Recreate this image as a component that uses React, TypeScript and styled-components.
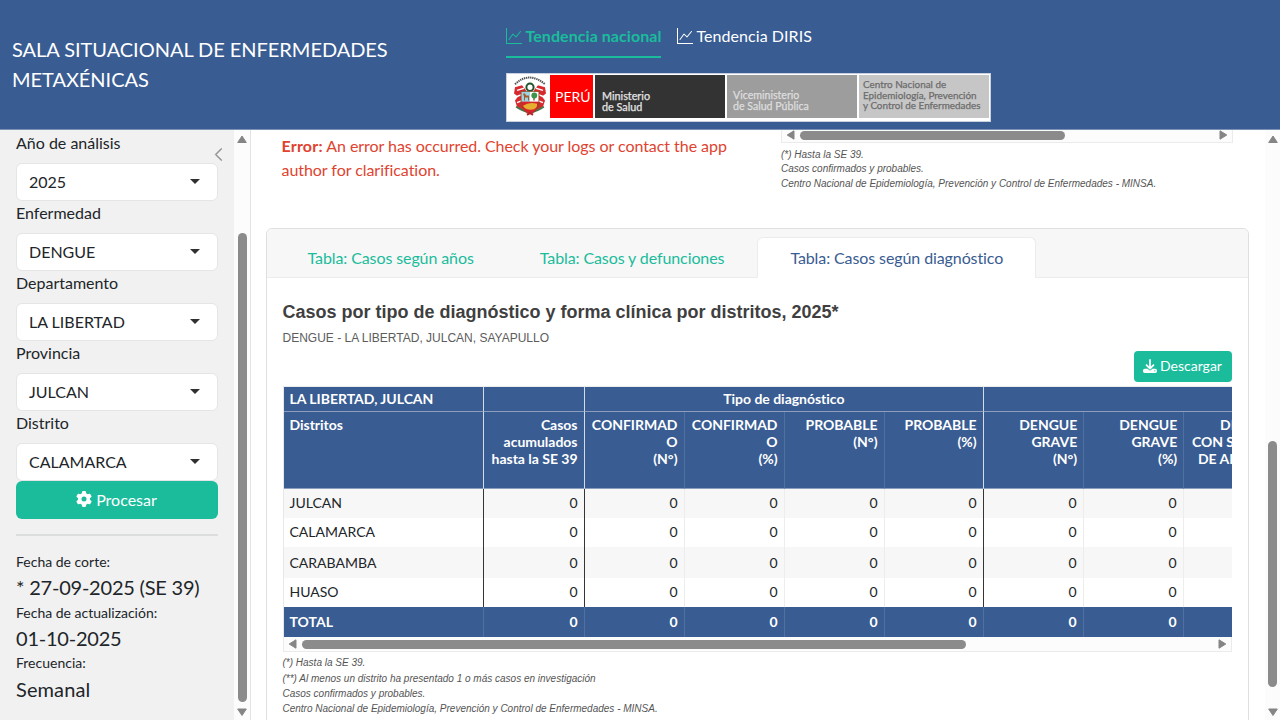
import React from "react";
import styled, { createGlobalStyle, css } from "styled-components";
import { BsGraphUp, BsChevronLeft } from "react-icons/bs";
import { FaGear, FaDownload } from "react-icons/fa6";

const BLUE = "#395c92";
const GREEN = "#1abc9c";

const GlobalStyle = createGlobalStyle`
  * { box-sizing: border-box; }
  body { margin: 0; overflow: hidden; background: #fff; color: #212529; font: 16px/24px Lato, sans-serif; }
`;

const Page = styled.div`
  width: 1280px;
  height: 720px;
  display: flex;
  flex-direction: column;
  overflow: hidden;
`;

const Header = styled.header`
  flex: none;
  height: 130px;
  display: flex;
  background: ${BLUE};
  border-bottom: 1px solid #7b91b5;
`;

const Brand = styled.h1`
  width: 506px;
  margin: 0;
  padding: 34px 90px 0 12px;
  font-size: 20px;
  line-height: 30px;
  font-weight: 400;
  letter-spacing: -0.04px;
  color: #fff;
`;

const HeaderMain = styled.div`
  display: flex;
  flex-direction: column;
  padding-top: 16px;
`;

const Nav = styled.nav`
  display: flex;
  gap: 15.5px;
  height: 57px;
`;

const NavLink = styled.a<{ $active?: boolean }>`
  display: flex;
  align-items: center;
  gap: 3.5px;
  height: 42px;
  white-space: nowrap;
  letter-spacing: 0.06px;
  color: ${(p) => (p.$active ? GREEN : "#fff")};
  font-weight: ${(p) => (p.$active ? 700 : 400)};
  border-bottom: 2px solid ${(p) => (p.$active ? GREEN : "transparent")};
  svg { flex: none; }
`;

const Banner = styled.div`
  display: flex;
  gap: 2px;
  width: 485px;
  height: 49px;
  padding: 1px 1px 3px 1px;
  background: #fff;
  border: 1px solid #c8d0de;
`;

const Emblem = styled.div`
  width: 41px;
  padding: 1px 0 0 5px;
  svg { display: block; }
`;

const Plate = styled.div<{ $w: number; $bg: string; $fg: string; $top: number; $size: number; $line: number; $pad?: number; $stroke?: number }>`
  width: ${(p) => p.$w}px;
  flex: none;
  background: ${(p) => p.$bg};
  color: ${(p) => p.$fg};
  padding: ${(p) => p.$top}px 0 0 ${(p) => p.$pad ?? 6}px;
  font-size: ${(p) => p.$size}px;
  line-height: ${(p) => p.$line}px;
  -webkit-text-stroke: ${(p) => p.$stroke ?? 0.25}px ${(p) => p.$fg};
  white-space: nowrap;
`;

const Body = styled.div`
  flex: 1;
  min-height: 0;
  display: flex;
`;

const Sidebar = styled.aside`
  width: 251px;
  flex: none;
  display: flex;
  background: #f1f1f1;
  border-right: 1px solid #e2e3e4;
  position: relative;
`;

const Collapse = styled.button`
  position: absolute;
  left: 211px;
  top: 17px;
  padding: 0;
  border: 0;
  background: none;
  color: #8b8d8f;
  line-height: 0;
  svg { stroke-width: 0.6; }
`;

const SidebarContent = styled.div`
  width: 234px;
  padding: 1px 16px 0 16px;
`;

const Field = styled.label`
  display: flex;
  flex-direction: column;
  gap: 8px;
`;

const Select = styled.span`
  display: flex;
  align-items: center;
  justify-content: space-between;
  height: 38px;
  padding: 0 17px 1px 12px;
  background: #fff;
  border: 1px solid #e3e5e7;
  border-radius: 6px;
  &::after {
    content: "";
    margin-top: -1px;
    border: 5px solid transparent;
    border-top-color: #303030;
    border-bottom: 0;
  }
`;

const Button = styled.button<{ $small?: boolean }>`
  display: flex;
  align-items: center;
  justify-content: center;
  gap: ${(p) => (p.$small ? 3 : 4)}px;
  border: 0;
  color: #fff;
  background: ${GREEN};
  font-family: Lato, sans-serif;
  ${(p) =>
    p.$small
      ? css`width: 98px; height: 31px; padding: 0 1px 2px 0; font-size: 14px; border-radius: 4px;`
      : css`width: 100%; height: 38px; padding: 0 1px 2px 0; font-size: 16px; border-radius: 6px;`}
`;

const Rule = styled.hr`
  height: 2px;
  margin: 15px 0 15px;
  border: 0;
  background: #dcdddd;
`;

const Caption = styled.div`
  font-size: 14px;
  line-height: 21px;
`;

const Value = styled.div<{ $tight?: boolean }>`
  height: ${(p) => (p.$tight ? 29.7 : 32)}px;
  font-size: 20px;
  line-height: ${(p) => (p.$tight ? 30 : 32)}px;
  white-space: nowrap;
  letter-spacing: ${(p) => (p.$tight ? "-0.22px" : "0.1px")};
`;

const VBar = styled.div<{ $w: number }>`
  width: ${(p) => p.$w}px;
  flex: none;
  display: flex;
  flex-direction: column;
  align-items: center;
  background: #fcfcfc;
  padding: 4px 0 3px;
`;

const VThumb = styled.div<{ $before: number; $len: number }>`
  width: 9px;
  height: ${(p) => p.$len}px;
  margin-top: ${(p) => p.$before}px;
  margin-bottom: auto;
  border-radius: 5px;
  background: #8b8b8b;
`;

const HBar = styled.div<{ $h: number; $lift?: number }>`
  display: flex;
  align-items: center;
  height: ${(p) => p.$h}px;
  padding: 0 4px ${(p) => p.$lift ?? 0}px;
  background: #fcfcfc;
  border: 1px solid #ebebeb;
  border-top: 0;
`;

const HThumb = styled.div<{ $len: number }>`
  width: ${(p) => p.$len}px;
  height: 9px;
  margin: 0 auto 0 4px;
  border-radius: 5px;
  background: #8b8b8b;
`;

const Main = styled.main`
  width: 1014px;
  flex: none;
  padding: 0 16px 0 15px;
  overflow: hidden;
`;

const Upper = styled.div`
  display: flex;
  height: 98px;
  padding-left: 15.5px;
`;

const ErrorText = styled.p`
  width: 499.5px;
  margin: 0;
  padding: 4px 40px 0 0;
  letter-spacing: -0.05px;
  color: #e0432f;
  b { font-weight: 700; letter-spacing: 0.2px; }
`;

const SideTable = styled.div`
  width: 452px;
`;

const Notes = styled.div<{ $top: number }>`
  padding-top: ${(p) => p.$top}px;
  font: italic 10px/15px "Liberation Sans", sans-serif;
  color: #555;
  white-space: nowrap;
`;

const Note = styled.div<{ $h?: number }>`
  height: ${(p) => p.$h ?? 15}px;
`;

const Card = styled.section`
  width: 983px;
  height: 520px;
  border: 1px solid #dfdfdf;
  border-radius: 6px;
  background: #fff;
`;

const Tabs = styled.div`
  display: flex;
  height: 49px;
  padding: 8px 8px 0 7.5px;
  background: #f7f7f7;
  border-bottom: 1px solid #ececec;
  border-radius: 6px 6px 0 0;
`;

const Tab = styled.a<{ $active?: boolean }>`
  height: 41px;
  padding: 8px 32px 0;
  white-space: nowrap;
  letter-spacing: -0.1px;
  color: ${(p) => (p.$active ? BLUE : GREEN)};
  background: ${(p) => (p.$active ? "#fff" : "transparent")};
  border: 1px solid ${(p) => (p.$active ? "#ececec" : "transparent")};
  border-bottom: 0;
  border-radius: 6px 6px 0 0;
`;

const CardBody = styled.div`
  padding: 21px 16px 0 15.5px;
`;

const Title = styled.h2`
  margin: 0;
  font: bold 18px/26px "Liberation Sans", sans-serif;
  color: #3f3f3f;
`;

const Subtitle = styled.div`
  font: 12px/26px "Liberation Sans", sans-serif;
  color: #5c5c5c;
`;

const Actions = styled.div`
  display: flex;
  justify-content: flex-end;
  height: 35px;
`;

const TableClip = styled.div`
  overflow: hidden;
  border-left: 1px solid #e8e8e8;
  border-top: 1px solid #ececec;
`;

const Table = styled.table`
  width: 1000px;
  table-layout: fixed;
  border-collapse: separate;
  border-spacing: 0;
  font-size: 14px;
  line-height: 17px;
`;

const Cell = styled.td<{ $dark?: boolean; $left?: boolean }>`
  padding: 0 6px 2px;
  text-align: ${(p) => (p.$left ? "left" : "right")};
  border-right: 1px solid ${(p) => (p.$dark ? "#353535" : "#ededed")};
`;

const HeadCell = styled.th<{ $strong?: boolean; $align: string; $top?: boolean }>`
  padding: ${(p) => (p.$top ? "0 6px 2px" : "4px 6px 0")};
  text-align: ${(p) => p.$align};
  vertical-align: ${(p) => (p.$top ? "middle" : "top")};
  font-weight: 700;
  letter-spacing: -0.02px;
  color: #fff;
  background: ${BLUE};
  white-space: pre;
  border-right: 1px solid ${(p) => (p.$strong ? "#d4dbe7" : "#50709f")};
  border-bottom: 1px solid #8b9ebe;
  &:nth-last-child(-n + 3) { padding-right: 5.3px; }
  &:last-child { padding-right: 4.5px; }
`;

const Row = styled.tr<{ $h: number; $shade?: boolean; $total?: boolean }>`
  height: ${(p) => p.$h}px;
  background: ${(p) => (p.$total ? BLUE : p.$shade ? "#f7f7f7" : "#fff")};
  ${(p) =>
    p.$h === 31 &&
    css`
      ${Cell} { padding-bottom: 0; }
    `}
  ${(p) =>
    p.$total &&
    css`
      color: #fff;
      font-weight: 700;
      ${Cell} { border-right-color: #50709f; }
    `}
`;

function Arrow({ dir }: { dir: "up" | "down" | "left" | "right" }) {
  const shapes = {
    up: "M5 2L9.3 8.5H.7z",
    down: "M5 8.5L.7 2h8.6z",
    left: "M1.2 5L8 .8v8.4z",
    right: "M8.8 5L2 .8v8.4z",
  };
  return (
    <svg width="10" height="10" viewBox="0 0 10 10" style={{ flex: "none" }}>
      <path d={shapes[dir]} fill="#858585" stroke="#858585" strokeLinejoin="round" />
    </svg>
  );
}

function CoatOfArms() {
  return (
    <svg width="34" height="41" viewBox="0 0 34 40" preserveAspectRatio="none">
      <path d="M2 8Q16 -5 32 8" fill="none" stroke="#555" strokeWidth="2" strokeDasharray="1.4 .7" />
      <path d="M2 11L9 9L13 14L10 34L4 30L2 24L5 20L1 17ZM32 11L25 9L21 14L24 34L30 30L32 24L29 20L33 17Z" fill="#d8292f" />
      <path d="M4 14L11 12M30 14L23 12M4 20L9 18M30 20L25 18M4 26L9 24M30 26L25 24" stroke="#fff" strokeWidth="1.4" />
      <path d="M3 30Q10 34 14 35M31 30Q24 34 20 35" fill="none" stroke="#47784b" strokeWidth="1.5" />
      <circle cx="17" cy="11" r="3.6" fill="#fff" stroke="#23532b" strokeWidth="2" />
      <path d="M8 15H26V27Q25 35 17 37Q9 35 8 27Z" fill="#d6242c" stroke="#7a5726" strokeWidth=".8" />
      <path d="M8.5 15.5H17V25H8.5Z" fill="#9ed5e4" />
      <path d="M17 15.5H25.5V25H17Z" fill="#fff" />
      <path d="M11 24V20L10 17H12L13 19H16V24H15V21H12V24Z" fill="#a65a2a" />
      <path d="M21 24V20" stroke="#6b4a26" strokeWidth="1.3" />
      <circle cx="21.3" cy="19" r="2.9" fill="#3f944b" />
      <path d="M10 29Q16 25 24 27Q25 32 18 33Q12 33 10 29Z" fill="#e5b02f" />
      <path d="M14 38L17 36L20 38" fill="none" stroke="#b5242a" strokeWidth="2" />
    </svg>
  );
}

const fields = [
  ["Año de análisis", "2025"],
  ["Enfermedad", "DENGUE"],
  ["Departamento", "LA LIBERTAD"],
  ["Provincia", "JULCAN"],
  ["Distrito", "CALAMARCA"],
];

const columns = [
  "Casos\nacumulados\nhasta la SE 39",
  "CONFIRMAD\nO\n(N°)",
  "CONFIRMAD\nO\n(%)",
  "PROBABLE\n(N°)",
  "PROBABLE\n(%)",
  "DENGUE\nGRAVE\n(N°)",
  "DENGUE\nGRAVE\n(%)",
  "DENGUE\nCON SIGNOS\nDE ALARMA",
];

const widths = [101, 100, 100, 100, 99, 100, 100, 100];

const rows: { name: string; h: number; shade?: boolean; total?: boolean }[] = [
  { name: "JULCAN", h: 29, shade: true },
  { name: "CALAMARCA", h: 29 },
  { name: "CARABAMBA", h: 31, shade: true },
  { name: "HUASO", h: 29 },
  { name: "TOTAL", h: 30, total: true },
];

const groupEnd = (i: number) => i === 0 || i === 4;

export default function App() {
  return (
    <Page>
      <GlobalStyle />
      <Header>
        <Brand>SALA SITUACIONAL DE ENFERMEDADES METAXÉNICAS</Brand>
        <HeaderMain>
          <Nav>
            <NavLink $active><BsGraphUp size={16} />Tendencia nacional</NavLink>
            <NavLink><BsGraphUp size={16} />Tendencia DIRIS</NavLink>
          </Nav>
          <Banner>
            <Emblem><CoatOfArms /></Emblem>
            <Plate $w={43} $bg="#fe0000" $fg="#fff" $top={13} $size={14} $line={18} $pad={5} $stroke={0}>PERÚ</Plate>
            <Plate $w={130} $bg="#333" $fg="#e4e4e4" $top={15} $size={10.8} $line={11} $pad={7}>Ministerio<br />de Salud</Plate>
            <Plate $w={130} $bg="#9d9d9d" $fg="#dedede" $top={15} $size={10.6} $line={11}>Viceministerio<br />de Salud Pública</Plate>
            <Plate $w={130} $bg="#c6c6c6" $fg="#6c6c6c" $top={4} $size={9.9} $line={10.7} $pad={4}>
              Centro Nacional de<br />Epidemiología, Prevención<br />y Control de Enfermedades
            </Plate>
          </Banner>
        </HeaderMain>
      </Header>
      <Body>
        <Sidebar>
          <SidebarContent>
            {fields.map(([label, value]) => (
              <Field key={label}>{label}<Select>{value}</Select></Field>
            ))}
            <Button><FaGear size={16} />Procesar</Button>
            <Rule />
            <Caption>Fecha de corte:</Caption>
            <Value $tight>* 27-09-2025 (SE 39)</Value>
            <Caption>Fecha de actualización:</Caption>
            <Value $tight>01-10-2025</Value>
            <Caption>Frecuencia:</Caption>
            <Value>Semanal</Value>
          </SidebarContent>
          <VBar $w={16}>
            <Arrow dir="up" />
            <VThumb $before={89} $len={469} />
            <Arrow dir="down" />
          </VBar>
          <Collapse aria-label="Contraer"><BsChevronLeft size={15} /></Collapse>
        </Sidebar>
        <Main>
          <Upper>
            <ErrorText><b>Error:</b> An error has occurred. Check your logs or contact the app author for clarification.</ErrorText>
            <SideTable>
              <HBar $h={13} $lift={2}>
                <Arrow dir="left" /><HThumb $len={265} /><Arrow dir="right" />
              </HBar>
              <Notes $top={4}>
                <Note $h={14}>(*) Hasta la SE 39.</Note>
                <Note>Casos confirmados y probables.</Note>
                <Note>Centro Nacional de Epidemiología, Prevención y Control de Enfermedades - MINSA.</Note>
              </Notes>
            </SideTable>
          </Upper>
          <Card>
            <Tabs>
              <Tab>Tabla: Casos según años</Tab>
              <Tab>Tabla: Casos y defunciones</Tab>
              <Tab $active>Tabla: Casos según diagnóstico</Tab>
            </Tabs>
            <CardBody>
              <Title>Casos por tipo de diagnóstico y forma clínica por distritos, 2025*</Title>
              <Subtitle>DENGUE - LA LIBERTAD, JULCAN, SAYAPULLO</Subtitle>
              <Actions>
                <Button $small><FaDownload size={14} />Descargar</Button>
              </Actions>
              <TableClip>
                <Table>
                  <colgroup>
                    <col style={{ width: 200 }} />
                    {columns.map((c, i) => <col key={c} style={{ width: widths[i] }} />)}
                  </colgroup>
                  <thead>
                    <tr style={{ height: 25 }}>
                      <HeadCell $top $strong $align="left">LA LIBERTAD, JULCAN</HeadCell>
                      <HeadCell $top $strong $align="left" />
                      <HeadCell $top $strong $align="center" colSpan={4}>Tipo de diagnóstico</HeadCell>
                      <HeadCell $top $align="center" colSpan={3} />
                    </tr>
                    <tr style={{ height: 77 }}>
                      <HeadCell $strong $align="left">Distritos</HeadCell>
                      {columns.map((c, i) => (
                        <HeadCell key={c} $align="right" $strong={groupEnd(i)}>{c}</HeadCell>
                      ))}
                    </tr>
                  </thead>
                  <tbody>
                    {rows.map((r) => (
                      <Row key={r.name} $h={r.h} $shade={r.shade} $total={r.total}>
                        <Cell $left $dark>{r.name}</Cell>
                        {columns.map((c, i) => <Cell key={c} $dark={groupEnd(i)}>0</Cell>)}
                      </Row>
                    ))}
                  </tbody>
                </Table>
              </TableClip>
              <HBar $h={15}>
                <Arrow dir="left" /><HThumb $len={664} /><Arrow dir="right" />
              </HBar>
              <Notes $top={3}>
                <Note $h={16}>(*) Hasta la SE 39.</Note>
                <Note>(**) Al menos un distrito ha presentado 1 o más casos en investigación</Note>
                <Note>Casos confirmados y probables.</Note>
                <Note>Centro Nacional de Epidemiología, Prevención y Control de Enfermedades - MINSA.</Note>
              </Notes>
            </CardBody>
          </Card>
        </Main>
        <VBar $w={15}>
          <Arrow dir="up" />
          <VThumb $before={297} $len={246} />
          <Arrow dir="down" />
        </VBar>
      </Body>
    </Page>
  );
}
